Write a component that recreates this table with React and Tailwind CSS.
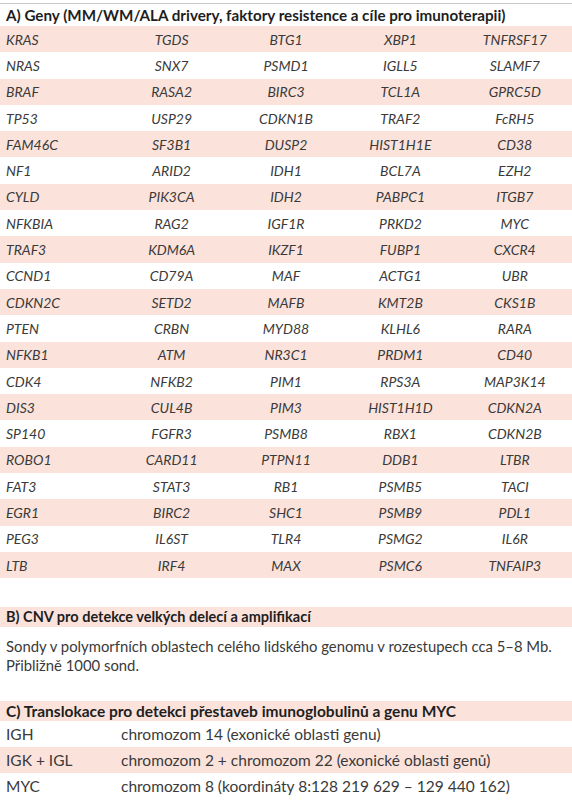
import React from "react";

const genes = [
  ["KRAS", "TGDS", "BTG1", "XBP1", "TNFRSF17"],
  ["NRAS", "SNX7", "PSMD1", "IGLL5", "SLAMF7"],
  ["BRAF", "RASA2", "BIRC3", "TCL1A", "GPRC5D"],
  ["TP53", "USP29", "CDKN1B", "TRAF2", "FcRH5"],
  ["FAM46C", "SF3B1", "DUSP2", "HIST1H1E", "CD38"],
  ["NF1", "ARID2", "IDH1", "BCL7A", "EZH2"],
  ["CYLD", "PIK3CA", "IDH2", "PABPC1", "ITGB7"],
  ["NFKBIA", "RAG2", "IGF1R", "PRKD2", "MYC"],
  ["TRAF3", "KDM6A", "IKZF1", "FUBP1", "CXCR4"],
  ["CCND1", "CD79A", "MAF", "ACTG1", "UBR"],
  ["CDKN2C", "SETD2", "MAFB", "KMT2B", "CKS1B"],
  ["PTEN", "CRBN", "MYD88", "KLHL6", "RARA"],
  ["NFKB1", "ATM", "NR3C1", "PRDM1", "CD40"],
  ["CDK4", "NFKB2", "PIM1", "RPS3A", "MAP3K14"],
  ["DIS3", "CUL4B", "PIM3", "HIST1H1D", "CDKN2A"],
  ["SP140", "FGFR3", "PSMB8", "RBX1", "CDKN2B"],
  ["ROBO1", "CARD11", "PTPN11", "DDB1", "LTBR"],
  ["FAT3", "STAT3", "RB1", "PSMB5", "TACI"],
  ["EGR1", "BIRC2", "SHC1", "PSMB9", "PDL1"],
  ["PEG3", "IL6ST", "TLR4", "PSMG2", "IL6R"],
  ["LTB", "IRF4", "MAX", "PSMC6", "TNFAIP3"],
];

const translocations = [
  ["IGH", "chromozom 14 (exonické oblasti genu)"],
  ["IGK + IGL", "chromozom 2 + chromozom 22 (exonické oblasti genů)"],
  ["MYC", "chromozom 8 (koordináty 8:128 219 629 – 129 440 162)"],
];

export default function App() {
  return (
    <div className="w-[572px] h-[800px] overflow-hidden bg-white text-[#3a3a3a] font-['Lato',sans-serif]">
      <div className="h-[3px]" />
      <div className="border-t border-[#c8c8c8] h-[23px] flex items-center px-[6px] text-[15.2px] font-bold text-[#1e1e1e]">
        A) Geny (MM/WM/ALA drivery, faktory resistence a cíle pro imunoterapii)
      </div>

      {genes.map((row, i) => (
        <div
          key={i}
          className={`grid grid-cols-5 h-[26.3px] items-center text-[14px] italic ${
            i % 2 === 0 ? "bg-[#fbe3dc]" : "bg-white"
          }`}
        >
          {row.map((g, j) => (
            <div key={j} className={j === 0 ? "pl-[6px]" : "text-center"}>
              {g}
            </div>
          ))}
        </div>
      ))}

      <div className="h-[29px]" />
      <div className="bg-[#fbe3dc] h-[20px] flex items-center px-[6px] text-[14.5px] font-bold text-[#1e1e1e]">
        B) CNV pro detekce velkých delecí a amplifikací
      </div>
      <div className="px-[6px] pt-[10px] text-[14.85px] leading-[19px]">
        <p>Sondy v polymorfních oblastech celého lidského genomu v rozestupech cca 5–8 Mb.</p>
        <p>Přibližně 1000 sond.</p>
      </div>

      <div className="h-[26px]" />
      <div className="bg-[#fbe3dc] h-[20px] flex items-center px-[6px] text-[15.5px] font-bold text-[#1e1e1e]">
        C) Translokace pro detekci přestaveb imunoglobulinů a genu MYC
      </div>
      {translocations.map(([a, b], i) => (
        <div
          key={a}
          className={`flex h-[26px] items-center text-[15.5px] ${
            i % 2 === 1 ? "bg-[#fbe3dc]" : "bg-white"
          }`}
        >
          <div className="w-[121px] pl-[6px]">{a}</div>
          <div>{b}</div>
        </div>
      ))}
    </div>
  );
}
